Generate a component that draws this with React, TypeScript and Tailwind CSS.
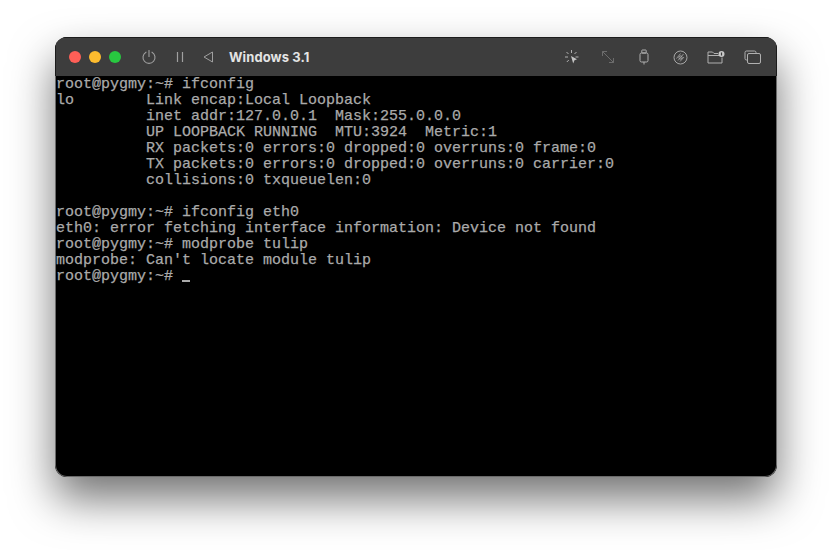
import React from "react";

const lines = [
  "root@pygmy:~# ifconfig",
  "lo        Link encap:Local Loopback",
  "          inet addr:127.0.0.1  Mask:255.0.0.0",
  "          UP LOOPBACK RUNNING  MTU:3924  Metric:1",
  "          RX packets:0 errors:0 dropped:0 overruns:0 frame:0",
  "          TX packets:0 errors:0 dropped:0 overruns:0 carrier:0",
  "          collisions:0 txqueuelen:0",
  " ",
  "root@pygmy:~# ifconfig eth0",
  "eth0: error fetching interface information: Device not found",
  "root@pygmy:~# modprobe tulip",
  "modprobe: Can't locate module tulip",
];

const Slot: React.FC<{ children: React.ReactNode }> = ({ children }) => (
  <div className="w-9 flex items-center justify-center">{children}</div>
);

const App: React.FC = () => {
  return (
    <div className="w-[832px] h-[550px] overflow-hidden bg-white pt-[37px] pl-[55px]">
      <div className="w-[722px] h-[440px] rounded-[12px] bg-black shadow-[0_22px_44px_rgba(0,0,0,0.55)] overflow-hidden flex flex-col">
        {/* Title bar */}
        <div className="h-[39px] shrink-0 bg-[#3d3d3d] border-t border-x border-[#1c1c1c] flex items-center pl-[13px] pr-[6px]">
          <div className="flex items-center gap-2">
            <span className="w-3 h-3 rounded-full bg-[#ff5f57]" />
            <span className="w-3 h-3 rounded-full bg-[#febc2e]" />
            <span className="w-3 h-3 rounded-full bg-[#28c840]" />
          </div>
          <svg width="16" height="16" viewBox="0 0 16 16" fill="none" stroke="#a0a0a0" strokeWidth="1.1" strokeLinecap="round" className="ml-[20px]">
            <path d="M8 1.5v6" />
            <path d="M5 3.2a6 6 0 1 0 6 0" />
          </svg>
          <svg width="8" height="12" viewBox="0 0 8 12" fill="none" stroke="#a0a0a0" strokeWidth="1.2" className="ml-[19px]">
            <path d="M1.500 1v10M6.500 1v10" />
          </svg>
          <svg width="11" height="12" viewBox="0 0 11 12" fill="none" stroke="#a0a0a0" strokeLinejoin="round" className="ml-[19px]">
            <path d="M9.500 1 L1 6 L9.500 11 Z" />
          </svg>
          <span
            className="ml-[15px] mt-[2px] text-[13px] font-bold tracking-[0.1px] text-[#e4e4e4]"
            style={{ fontFamily: '"Inter", "Liberation Sans", sans-serif' }}
          >
            Windows 3.1
          </span>
          <div className="ml-auto flex items-center">
            <Slot>
              <svg width="16" height="16" viewBox="0 0 16 16" fill="none" stroke="#b0b0b0" strokeWidth="1">
                <path d="M7.500 1v3M2.500 3l2 2M1 8h3M2.800 13l2-2M12.500 3l-2 2M14.500 8h-3" />
                <path d="M7 7l6 3.200-2.500 1L9.200 14.500z" fill="#c4c4c4" stroke="none" />
              </svg>
            </Slot>
            <Slot>
              <svg width="16" height="16" viewBox="0 0 16 16" fill="none" stroke="#6c6c6c" strokeWidth="1">
                <path d="M2.500 2.500l11 11M2.500 2.500v4.500M2.500 2.500h4.500M13.500 13.500V9M13.500 13.500H9" />
              </svg>
            </Slot>
            <Slot>
              <svg width="10" height="16" viewBox="0 0 10 16" fill="none" stroke="#b0b0b0" strokeWidth="1">
                <rect x="1" y="4" width="8" height="9" rx="1.500" />
                <rect x="2.800" y="1" width="4.400" height="3" rx="0.500" />
                <path d="M5 13v2.500" />
              </svg>
            </Slot>
            <Slot>
              <svg width="15" height="15" viewBox="0 0 15 15" fill="none" stroke="#a8a8a8" strokeWidth="1">
                <circle cx="7.500" cy="7.500" r="6.500" />
                <circle cx="7.500" cy="7.500" r="1.600" />
                <path d="M3.500 8.500l4-5M5 10.500l5.500-6.500M7 11.500l4-4.500" strokeWidth="0.800" />
              </svg>
            </Slot>
            <Slot>
              <svg width="18" height="13" viewBox="0 0 18 13" fill="none" stroke="#b0b0b0" strokeWidth="1">
                <path d="M11 2.500H7L5.500 1H1v11h14V6.500" />
                <path d="M1 4.500h11" />
                <circle cx="14.500" cy="3" r="3" fill="#c8c8c8" stroke="none" />
                <path d="M14.500 1.500v3" stroke="#3d3d3d" strokeWidth="1.200" />
              </svg>
            </Slot>
            <Slot>
              <svg width="17" height="14" viewBox="0 0 17 14" fill="none" stroke="#b0b0b0" strokeWidth="1">
                <path d="M3.500 10H2.500A1.500 1.500 0 0 1 1 8.500V2.500A1.500 1.500 0 0 1 2.500 1h8A1.500 1.500 0 0 1 12 2.500V3.500" />
                <rect x="3.500" y="3.500" width="13" height="10" rx="1.500" />
              </svg>
            </Slot>
          </div>
        </div>
        {/* Console */}
        <div
          className="flex-1 bg-black border-x border-b border-[#6a6a6a] rounded-b-[12px] pt-px text-[#aaaaaa] text-[15px] leading-[16px] whitespace-pre [-webkit-text-stroke:0.25px_#aaaaaa]"
          style={{ fontFamily: '"Liberation Mono", monospace' }}
        >
          {lines.map((l, i) => (
            <div key={i} className="h-4">{l}</div>
          ))}
          <div className="h-4">
            root@pygmy:~# <span className="inline-block w-[8px] h-[2px] bg-[#aaaaaa] align-[-2px]" />
          </div>
        </div>
      </div>
    </div>
  );
};

export default App;
